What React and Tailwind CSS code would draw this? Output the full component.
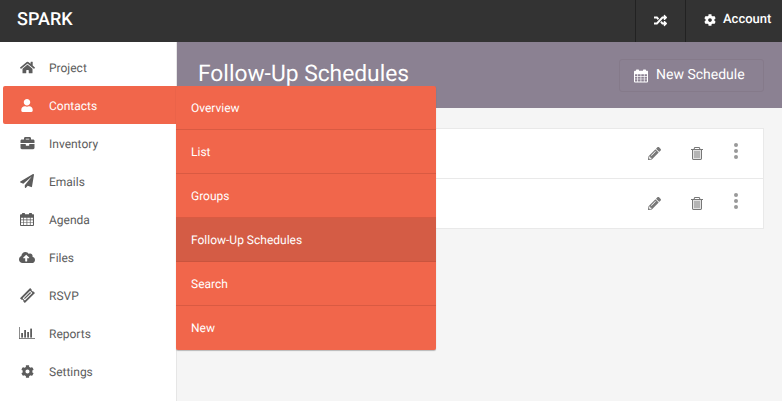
import React from 'react';
import { FaHome, FaUser, FaBriefcase, FaPaperPlane, FaCloudUploadAlt, FaCog, FaRandom, FaPencilAlt } from 'react-icons/fa';

// FA4-style calendar, the package only has the newer glyph
function CalendarIcon({ className }) {
  return (
    <svg viewBox="0 0 16 16" className={className} fill="currentColor">
      <path fillRule="evenodd" d="M3 0.5h2a.7.7 0 0 1 .7.7V2h4.6v-.8a.7.7 0 0 1 .7-.7h2a.7.7 0 0 1 .7.7V2h.6A1.2 1.2 0 0 1 16 3.2v11.1a1.2 1.2 0 0 1-1.2 1.2H1.2A1.2 1.2 0 0 1 0 14.3V3.2A1.2 1.2 0 0 1 1.2 2h1.1v-.8A.7.7 0 0 1 3 .5zM1.2 6v2h2.6V6zm3.4 0v2h2.9V6zm3.7 0v2h3V6zm3.8 0v2h2.7V6zM1.2 8.8v2.2h2.6V8.8zm3.4 0v2.2h2.9V8.8zm3.7 0v2.2h3V8.8zm3.8 0v2.2h2.7V8.8zM1.2 11.8v2.5h2.6v-2.5zm3.4 0v2.5h2.9v-2.5zm3.7 0v2.5h3v-2.5zm3.8 0v2.5h2.7v-2.5z" />
    </svg>
  );
}

function TicketIcon({ className }) {
  return (
    <svg viewBox="0 0 16 16" className={className} fill="currentColor">
      <path fillRule="evenodd" d="M10.8 0l1.6 1.6a1.6 1.6 0 0 0 2 2L16 5.2 5.2 16l-1.6-1.6a1.6 1.6 0 0 0-2-2L0 10.8zM10.8 2.8L2.8 10.8l2.4 2.4 8-8z" />
      <path d="M10.8 4.2l1 1-6.6 6.6-1-1z" />
    </svg>
  );
}

function ReportsIcon({ className }) {
  return (
    <svg viewBox="0 0 16 12" className={className} fill="currentColor">
      <path d="M0 0h.7v11.3H16V12H0z" />
      <rect x="2.2" y="6" width="1.8" height="4.6" />
      <rect x="5.2" y="3" width="1.8" height="7.6" />
      <rect x="8.2" y="5" width="1.8" height="5.6" />
      <rect x="11.2" y="1.6" width="1.8" height="9" />
    </svg>
  );
}

function TrashIcon({ className }) {
  return (
    <svg viewBox="0 0 12 13" className={className} fill="currentColor">
      <path fillRule="evenodd" d="M4 0h4a1 1 0 0 1 1 .8L9.4 2H12v1h-1v8.6a1.4 1.4 0 0 1-1.4 1.4H2.4A1.4 1.4 0 0 1 1 11.6V3H0V2h2.6L3 .8A1 1 0 0 1 4 0zM4 1l-.3 1h4.6L8 1zM2.2 3v8.6c0 .2.1.3.2.3h7.2c.1 0 .2-.1.2-.3V3z" />
      <path d="M3 3.6h6v7.8H3z" opacity="0.55" />
    </svg>
  );
}

const navItems = [
  { label: 'Project', icon: <FaHome className="w-[15px] h-[15px]" /> },
  { label: 'Contacts', icon: <FaUser className="w-[12px] h-[13px]" />, active: true },
  { label: 'Inventory', icon: <FaBriefcase className="w-[15px] h-[14px]" /> },
  { label: 'Emails', icon: <FaPaperPlane className="w-[14px] h-[14px]" /> },
  { label: 'Agenda', icon: <CalendarIcon className="w-[14px] h-[15px]" /> },
  { label: 'Files', icon: <FaCloudUploadAlt className="w-[16px] h-[15px]" /> },
  { label: 'RSVP', icon: <TicketIcon className="w-[15px] h-[15px]" /> },
  { label: 'Reports', icon: <ReportsIcon className="w-[16px] h-[12px]" /> },
  { label: 'Settings', icon: <FaCog className="w-[13px] h-[13px]" /> },
];

const subItems = ['Overview', 'List', 'Groups', 'Follow-Up Schedules', 'Search', 'New'];

function Row({ last }) {
  return (
    <div className={`flex items-start justify-end text-[#777777] ${last ? 'h-[49px]' : 'h-[50px] border-b border-[#e9e9e9]'}`}>
      <FaPencilAlt className="w-[13px] h-[13px] mt-[18px] mr-[30px]" />
      <TrashIcon className="w-[12px] h-[13px] mt-[18px] mr-[31px]" />
      <div className="w-[4px] mt-[14px] mr-[25px] flex flex-col gap-[2px]">
        <span className="w-[4px] h-[4px] rounded-full bg-[#999999]" />
        <span className="w-[4px] h-[4px] rounded-full bg-[#999999]" />
        <span className="w-[4px] h-[4px] rounded-full bg-[#999999]" />
      </div>
    </div>
  );
}

export default function App() {
  return (
    <div className="relative w-[782px] h-[401px] overflow-hidden bg-white font-['Roboto',sans-serif] [text-rendering:geometricPrecision]">
      <header className="h-[42px] bg-[#333333] flex items-stretch text-white">
        <div className="pl-[17px] text-[18px] leading-[40px] font-medium flex-1">SPARK</div>
        <div className="w-[50px] border-l border-[#222222] flex items-center justify-center pb-[2px]">
          <FaRandom className="w-[13px] h-[13px]" />
        </div>
        <div className="w-[97px] border-l border-[#222222] flex items-center pl-[18px] gap-[7px] text-[13px] font-medium pb-[2px]">
          <FaCog className="w-[12px] h-[12px]" />
          Account
        </div>
      </header>

      <div className="flex h-[359px]">
        <aside className="w-[177px] shrink-0 bg-white border-r border-[#e6e6e6] pt-[6px]">
          {navItems.map((item) => (
            <div
              key={item.label}
              className={`h-[38px] flex items-center text-[12px] ${item.active ? 'ml-[3px] w-[174px] bg-[#f1664b] text-white rounded-l-[2px] relative z-10' : 'text-[#5c5c5c]'}`}
            >
              <span className={`w-[16px] flex justify-center ${item.active ? 'ml-[16px]' : 'ml-[19px]'}`}>{item.icon}</span>
              <span className="ml-[14px] mt-[2px]">{item.label}</span>
            </div>
          ))}
        </aside>

        <main className="flex-1 bg-[#f5f5f5]">
          <div className="h-[66px] bg-[#8b8192] flex items-start justify-between pl-[21px] pr-[18px]">
            <h1 className="text-[22.8px] leading-[26px] mt-[19px] text-white">Follow-Up Schedules</h1>
            <div className="mt-[17px] w-[145px] h-[33px] rounded-[3px] border border-[#857a8a] flex items-center pl-[14px] gap-[8px] text-[14px] text-white">
              <CalendarIcon className="w-[14px] h-[14px]" />
              New Schedule
            </div>
          </div>
          <div className="mt-[20px] ml-[21px] mr-[18px] bg-white border border-[#e9e9e9]">
            <Row />
            <Row last />
          </div>
        </main>
      </div>

      {/* flyout sitting over the page */}
      <div className="absolute left-[176px] top-[86px] w-[260px] bg-[#f1664b] rounded-[2px] shadow-[0_1px_1px_rgba(0,0,0,0.25)] z-20 text-white text-[12px]">
        {subItems.map((label, i) => (
          <div
            key={label}
            className={`h-[44px] pl-[15px] flex items-center ${label === 'Follow-Up Schedules' ? 'bg-[#d45c45] border-b border-[#c9543e]' : ''} ${i < subItems.length - 1 && label !== 'Follow-Up Schedules' ? 'border-b border-[#d95a42]' : ''}`}
          >
            {label}
          </div>
        ))}
      </div>
    </div>
  );
}
